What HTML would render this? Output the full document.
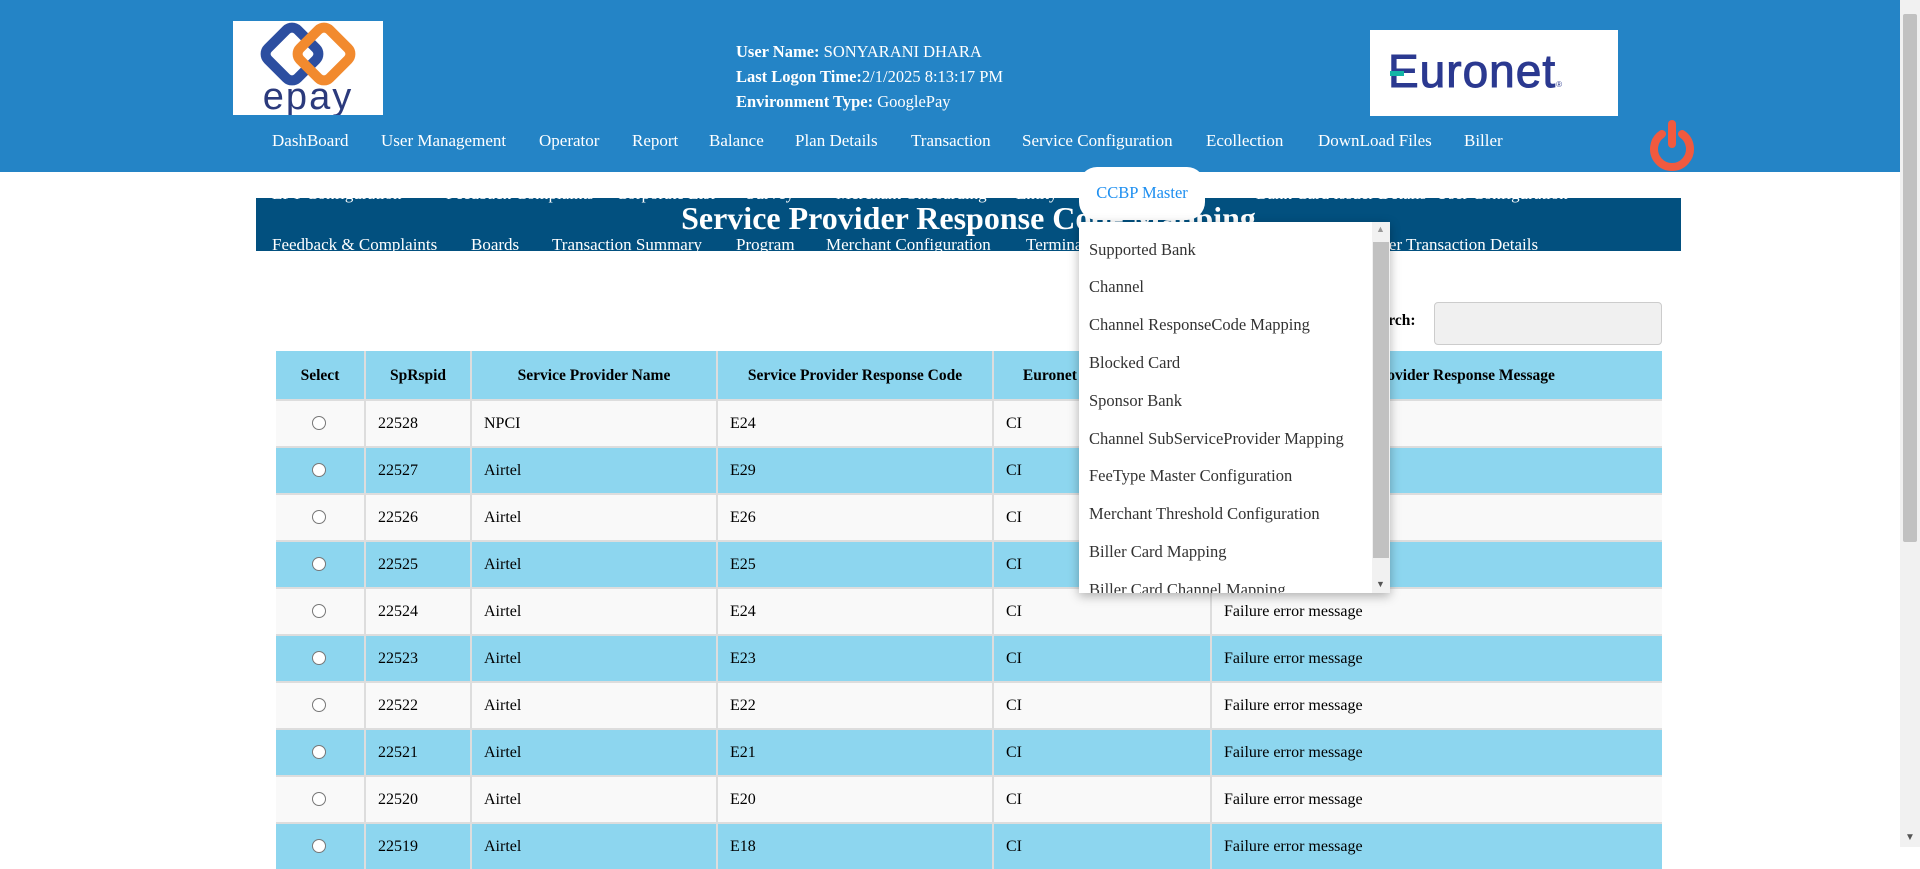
<!DOCTYPE html>
<html><head><meta charset="utf-8">
<style>
*{box-sizing:border-box;margin:0;padding:0}
body{width:1920px;height:847px;overflow:hidden;background:#fff;font-family:"Liberation Serif",serif;position:relative;color:#000}
.a{position:absolute;white-space:nowrap}
#hdr{position:absolute;left:0;top:0;width:1900px;height:172px;background:#2484c6}
.nav{position:absolute;top:131px;color:#fff;font-size:17px}
.info{left:736px;color:#fff;font-weight:bold;font-size:16.5px}
.info span{font-weight:normal}
#band{position:absolute;left:256px;top:198px;width:1425px;height:53px;background:#02507f;overflow:hidden}
.r3{position:absolute;top:37px;color:#fff;font-size:17px}
.r1{position:absolute;top:-14px;color:#fff;font-size:17px}
.hcell{position:absolute;top:351px;height:50px;background:#8dd6ef;font-weight:bold;font-size:15.5px;line-height:50px;text-align:center;border-left:2px solid #ddd}
.row{position:absolute;left:276px;width:1386px;height:47px;border-top:2px solid #ddd}
.c{position:absolute;top:0;height:45px;line-height:45px;font-size:16px;padding-left:12px;border-left:2px solid #ddd}
.rad{position:absolute;left:36px;top:15px;width:14px;height:14px;border:1px solid #777;border-radius:50%;background:#fff}
#dd{position:absolute;left:1079px;top:222px;width:311px;height:371px;background:#fff;box-shadow:0 3px 10px rgba(0,0,0,.3);overflow:hidden}
#dd div.it{position:absolute;left:10px;font-size:16.5px;color:#333}
</style></head><body>
<div id="hdr"></div>
<div class="a" style="left:233px;top:21px;width:150px;height:94px;background:#fff">
<svg width="150" height="94" viewBox="0 0 150 94">
<g fill="none" stroke-width="10" stroke-linejoin="round">
<rect x="38" y="12" width="42" height="42" rx="8" transform="rotate(45 59 33)" stroke="#2c4ea0"/>
<rect x="70" y="12" width="42" height="42" rx="8" transform="rotate(45 91 33)" stroke="#f28a2e"/>
</g>
<text x="75" y="88" text-anchor="middle" font-family="Liberation Sans,sans-serif" font-size="38" fill="#2b3a7c" letter-spacing="2">epay</text>
</svg></div>
<div class="a" style="left:1370px;top:30px;width:248px;height:86px;background:#fff">
<div class="a" style="left:18px;top:14px;font-family:'Liberation Sans',sans-serif;font-size:46px;color:#2b3990;letter-spacing:1px;-webkit-text-stroke:1px #2b3990">Euronet<span style="font-size:8px;-webkit-text-stroke:0">®</span></div>
<div class="a" style="left:20px;top:41px;width:14px;height:5px;background:#13b5a6"></div>
</div>
<div class="a info" style="top:42px">User Name: <span>SONYARANI DHARA</span></div>
<div class="a info" style="top:67px">Last Logon Time:<span>2/1/2025 8:13:17 PM</span></div>
<div class="a info" style="top:92px">Environment Type: <span>GooglePay</span></div>
<div class="a nav" style="left:272px">DashBoard</div>
<div class="a nav" style="left:381px">User Management</div>
<div class="a nav" style="left:539px">Operator</div>
<div class="a nav" style="left:632px">Report</div>
<div class="a nav" style="left:709px">Balance</div>
<div class="a nav" style="left:795px">Plan Details</div>
<div class="a nav" style="left:911px">Transaction</div>
<div class="a nav" style="left:1022px">Service Configuration</div>
<div class="a nav" style="left:1206px">Ecollection</div>
<div class="a nav" style="left:1318px">DownLoad Files</div>
<div class="a nav" style="left:1464px">Biller</div>
<svg class="a" style="left:1648px;top:118px" width="48" height="54" viewBox="0 0 48 54">
<path d="M14 16 A18 18 0 1 0 34 16" fill="none" stroke="#f15a3f" stroke-width="8" stroke-linecap="round"/>
<line x1="24" y1="6" x2="24" y2="26" stroke="#f15a3f" stroke-width="8" stroke-linecap="round"/>
</svg>
<div id="band">
<div class="r1" style="left:16px">EFT Configuration</div>
<div class="r1" style="left:190px">Feedback Complaints</div>
<div class="r1" style="left:360px">Corporate List</div>
<div class="r1" style="left:490px">Survey</div>
<div class="r1" style="left:580px">Merchant Onboarding</div>
<div class="r1" style="left:760px">Entity</div>
<div class="r1" style="left:1000px">Bank Card Issuer Details</div>
<div class="r1" style="left:1180px">User Configuration</div>
<div class="a" style="left:0;width:1425px;top:2px;text-align:center;color:#fff;font-weight:bold;font-size:32px">Service Provider Response Code Mapping</div>
<div class="r3" style="left:16px">Feedback &amp; Complaints</div>
<div class="r3" style="left:215px">Boards</div>
<div class="r3" style="left:296px">Transaction Summary</div>
<div class="r3" style="left:480px">Program</div>
<div class="r3" style="left:570px">Merchant Configuration</div>
<div class="r3" style="left:770px">Terminal</div>
<div class="r3" style="left:1114px">User Transaction Details</div>
</div>
<div class="a" style="left:1079px;top:167px;width:126px;height:53px;background:#fff;border-radius:18px;color:#1e8ff0;font-size:16.5px;text-align:center;line-height:52px">CCBP Master</div>
<div class="a" style="left:1365px;top:312px;font-weight:bold;font-size:15.5px">Search:</div>
<div class="a" style="left:1434px;top:302px;width:228px;height:43px;background:#f0f0f0;border:1px solid #ccc;border-radius:4px"></div>
<div class="hcell" style="left:276px;width:88px;border-left:0">Select</div>
<div class="hcell" style="left:364px;width:106px">SpRspid</div>
<div class="hcell" style="left:470px;width:246px">Service Provider Name</div>
<div class="hcell" style="left:716px;width:276px">Service Provider Response Code</div>
<div class="hcell" style="left:992px;width:218px">Euronet Response Code</div>
<div class="hcell" style="left:1210px;width:452px">Service Provider Response Message</div>
<div class="a" style="left:276px;top:399px;width:1386px;height:2px;background:#111"></div>
<div id="rows"></div>
<script>
var d=[["22528","NPCI","E24"],["22527","Airtel","E29"],["22526","Airtel","E26"],["22525","Airtel","E25"],["22524","Airtel","E24"],["22523","Airtel","E23"],["22522","Airtel","E22"],["22521","Airtel","E21"],["22520","Airtel","E20"],["22519","Airtel","E18"]];
var h="";
for(var i=0;i<d.length;i++){var t=401+i*47;var bg=i%2?"#8dd6ef":"#f9f9f9";
h+='<div class="row" style="top:'+(t-2)+'px;background:'+bg+'">'+
'<div class="c" style="left:0;width:88px;border-left:0"><div class="rad"></div></div>'+
'<div class="c" style="left:88px;width:106px">'+d[i][0]+'</div>'+
'<div class="c" style="left:194px;width:246px">'+d[i][1]+'</div>'+
'<div class="c" style="left:440px;width:276px">'+d[i][2]+'</div>'+
'<div class="c" style="left:716px;width:218px">CI</div>'+
'<div class="c" style="left:934px;width:452px">Failure error message</div></div>';}
document.getElementById("rows").innerHTML=h;
</script>
<div id="dd">
<div class="it" style="top:18px">Supported Bank</div>
<div class="it" style="top:55px">Channel</div>
<div class="it" style="top:93px">Channel ResponseCode Mapping</div>
<div class="it" style="top:131px">Blocked Card</div>
<div class="it" style="top:169px">Sponsor Bank</div>
<div class="it" style="top:207px">Channel SubServiceProvider Mapping</div>
<div class="it" style="top:244px">FeeType Master Configuration</div>
<div class="it" style="top:282px">Merchant Threshold Configuration</div>
<div class="it" style="top:320px">Biller Card Mapping</div>
<div class="it" style="top:358px">Biller Card Channel Mapping</div>
<div class="a" style="left:293px;top:0;width:18px;height:371px;background:#f1f1f1"></div>
<div class="a" style="left:294px;top:20px;width:16px;height:316px;background:#c1c1c1"></div>
<div class="a" style="left:297px;top:2px;font-size:9px;color:#999">▲</div>
<div class="a" style="left:297px;top:357px;font-size:9px;color:#555">▼</div>
</div>
<div class="a" style="left:1900px;top:0;width:20px;height:847px;background:#f1f1f1"></div>
<div class="a" style="left:1903px;top:14px;width:14px;height:528px;background:#c1c1c1;border-radius:2px"></div>
<div class="a" style="left:1905px;top:832px;font-size:10px;color:#555">▼</div>
</body></html>
